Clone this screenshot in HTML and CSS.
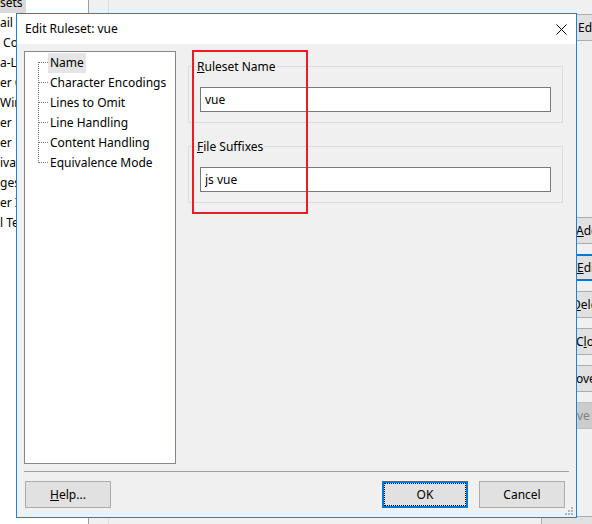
FILE: index.html
```html
<!DOCTYPE html>
<html>
<head>
<meta charset="utf-8">
<title>Edit Ruleset: vue</title>
<link rel="stylesheet" href="styles.css">
</head>
<body>
<div class="desk">
  <div class="bglist">
    <ul>
      <li class="bgrow"><span class="bgsel">sets</span></li>
      <li class="bgrow">ail L</li>
      <li class="bgrow"> Co</li>
      <li class="bgrow">a-Li</li>
      <li class="bgrow">er C</li>
      <li class="bgrow">Wir</li>
      <li class="bgrow">er</li>
      <li class="bgrow">er</li>
      <li class="bgrow">ival</li>
      <li class="bgrow">ges</li>
      <li class="bgrow">er In</li>
      <li class="bgrow">l Te</li>
    </ul>
  </div>
  <div class="bgmid"><div class="bgpanel"></div></div>
  <div class="bgright">
    <div class="bgbtn b-top">Edit...</div>
    <div class="bghline"></div>
    <div class="bgbtn b-add"><u>A</u>dd...</div>
    <div class="bgbtn b-edit"><u>E</u>dit...</div>
    <div class="bgbtn b-del"><u>D</u>elete</div>
    <div class="bgbtn"><span>C<u>l</u>one...</span></div>
    <div class="bgbtn b-up">Move Up</div>
    <div class="bgbtn b-down">Move Down</div>
    <div class="bgbtn b-restore">Restore</div>
  </div>
</div>

<div class="dialog">
  <div class="titlebar">
    <span class="title">Edit Ruleset: vue</span>
    <svg class="close" width="11" height="11" viewBox="0 0 11 11"><path d="M0.5 0.5L10.5 10.5M10.5 0.5L0.5 10.5" stroke="#000" stroke-width="1" fill="none"/></svg>
  </div>
  <div class="dbody">
    <div class="main">
      <div class="tree">
        <ul class="tlist">
          <li class="tnode"><span class="tlabel sel">Name</span></li>
          <li class="tnode"><span class="tlabel">Character Encodings</span></li>
          <li class="tnode"><span class="tlabel">Lines to Omit</span></li>
          <li class="tnode"><span class="tlabel">Line Handling</span></li>
          <li class="tnode"><span class="tlabel">Content Handling</span></li>
          <li class="tnode"><span class="tlabel">Equivalence Mode</span></li>
        </ul>
      </div>
      <div class="pane">
        <fieldset class="group">
          <legend><u>R</u>uleset Name</legend>
          <input class="field" type="text" value="vue">
        </fieldset>
        <fieldset class="group">
          <legend><u>F</u>ile Suffixes</legend>
          <input class="field" type="text" value="js vue">
        </fieldset>
      </div>
    </div>
    <div class="sep"></div>
    <div class="footer">
      <div class="btn"><span><u>H</u>elp...</span></div>
      <div class="btn ok">OK</div>
      <div class="btn">Cancel</div>
    </div>
  </div>
  <svg class="grip" width="9" height="9" viewBox="0 0 9 9">
    <rect x="6" y="0" width="2" height="2" fill="#b4b4b4"/>
    <rect x="3" y="3" width="2" height="2" fill="#b4b4b4"/>
    <rect x="6" y="3" width="2" height="2" fill="#b4b4b4"/>
    <rect x="0" y="6" width="2" height="2" fill="#b4b4b4"/>
    <rect x="3" y="6" width="2" height="2" fill="#b4b4b4"/>
    <rect x="6" y="6" width="2" height="2" fill="#b4b4b4"/>
  </svg>
</div>

<div class="redmark"></div>
</body>
</html>
```

FILE: styles.css
```css
html, body {
  margin: 0;
  padding: 0;
}
body {
  width: 592px;
  height: 524px;
  overflow: hidden;
  position: relative;
  background: #f0f0f0;
  font-family: "Noto Sans", "Open Sans", sans-serif;
  font-size: 12px;
  color: #000;
}

/* background window */
.desk {
  display: flex;
  width: 631px;
  height: 524px;
}
.bglist {
  width: 88px;
  background: #fff;
  border-right: 1px solid #a0a0a0;
  overflow: hidden;
}
.bglist ul {
  margin: -7px 0 0;
  padding: 0;
  list-style: none;
}
.bgrow {
  height: 20px;
  line-height: 20px;
  white-space: pre;
}
.bgsel {
  display: inline-block;
  width: 26px;
  height: 19px;
  margin-top: 1px;
  line-height: 17px;
  background: #d9d9d9;
}
.bgmid {
  flex: 1;
  padding-left: 19px;
}
.bgpanel {
  height: 100%;
  border-left: 1px solid #dcdcdc;
}
.bgright {
  width: 90px;
  display: flex;
  flex-direction: column;
}
.bgbtn {
  height: 27px;
  box-sizing: border-box;
  border: 1px solid #adadad;
  background: #e1e1e1;
  line-height: 25px;
  padding-left: 34px;
  margin-top: 10px;
  white-space: nowrap;
}
.b-top {
  margin-top: 14px;
  height: 28px;
  padding-left: 36px;
}
.bghline {
  height: 1px;
  background: #dcdcdc;
  margin-top: 20px;
}
.b-add {
  margin-top: 156px;
  height: 28px;
}
.b-edit {
  border: 2px solid #0078d7;
  line-height: 23px;
  padding-left: 34px;
}
.b-del {
  padding-left: 30px;
}
.b-up {
  padding-left: 23px;
}
.b-down {
  padding-left: 17px;
  background: #cccccc;
  border-color: #bfbfbf;
  color: #838383;
}
.b-restore {
  margin-top: 87px;
  padding-left: 8px;
}

/* dialog window */
.dialog {
  position: absolute;
  left: 16px;
  top: 13px;
  width: 561px;
  height: 505px;
  box-sizing: border-box;
  border: 1px solid #1883d7;
  background: #f0f0f0;
  display: flex;
  flex-direction: column;
}
.titlebar {
  height: 30px;
  flex: none;
  background: #fff;
  display: flex;
  align-items: center;
  justify-content: space-between;
  padding-left: 8px;
}
.title {
  line-height: 16px;
}
.close {
  margin-right: 9px;
  display: block;
}
.dbody {
  flex: 1;
  display: flex;
  flex-direction: column;
  padding: 7px 7px 9px;
}
.main {
  display: flex;
  gap: 12px;
  height: 413px;
  flex: none;
}
.tree {
  width: 152px;
  box-sizing: border-box;
  border: 1px solid #828790;
  background: #fff;
}
.tlist {
  position: relative;
  margin: 0;
  padding: 1px 0 0;
  list-style: none;
}
.tlist::before {
  content: "";
  position: absolute;
  left: 13px;
  top: 10px;
  height: 101px;
  border-left: 1px dotted #7a7a7a;
}
.tnode {
  height: 20px;
  display: flex;
  padding-left: 14px;
}
.tnode::before {
  content: "";
  width: 9px;
  height: 0;
  margin-top: 9px;
  border-top: 1px dotted #7a7a7a;
}
.tlabel {
  line-height: 20px;
  height: 20px;
  padding: 0 2px;
  white-space: nowrap;
}
.tlabel.sel {
  background: #e5e5e5;
}
.pane {
  width: 375px;
  display: flex;
  flex-direction: column;
  gap: 15px;
  padding-top: 7px;
}
.group {
  margin: 0;
  padding: 12px 11px 10px;
  border: 1px solid #dcdcdc;
  min-width: 0;
}
.group legend {
  padding: 0 1px;
  margin-left: -4px;
  line-height: 17px;
  height: 17px;
}
.field {
  display: block;
  width: 351px;
  height: 25px;
  box-sizing: border-box;
  margin: 0;
  border: 1px solid #7a7a7a;
  padding: 0 4px;
  font-family: inherit;
  font-size: 12px;
  color: #000;
  background: #fff;
  outline: none;
}
.sep {
  height: 1px;
  background: #a0a0a0;
  margin-top: 7px;
  flex: none;
}
.footer {
  display: flex;
  margin-top: 9px;
  padding: 0 4px 0 1px;
}
.btn {
  width: 86px;
  height: 27px;
  box-sizing: border-box;
  border: 1px solid #adadad;
  background: #e1e1e1;
  display: flex;
  align-items: center;
  justify-content: center;
}
.btn.ok {
  margin-left: auto;
  margin-right: 11px;
  border: 2px solid #0078d7;
  outline: 1px dotted #000;
  outline-offset: -3px;
}
.grip {
  position: absolute;
  right: 2px;
  bottom: 1px;
}

/* annotation */
.redmark {
  position: absolute;
  left: 192px;
  top: 50px;
  width: 116px;
  height: 164px;
  box-sizing: border-box;
  border: 2px solid #ec1c24;
}
```
